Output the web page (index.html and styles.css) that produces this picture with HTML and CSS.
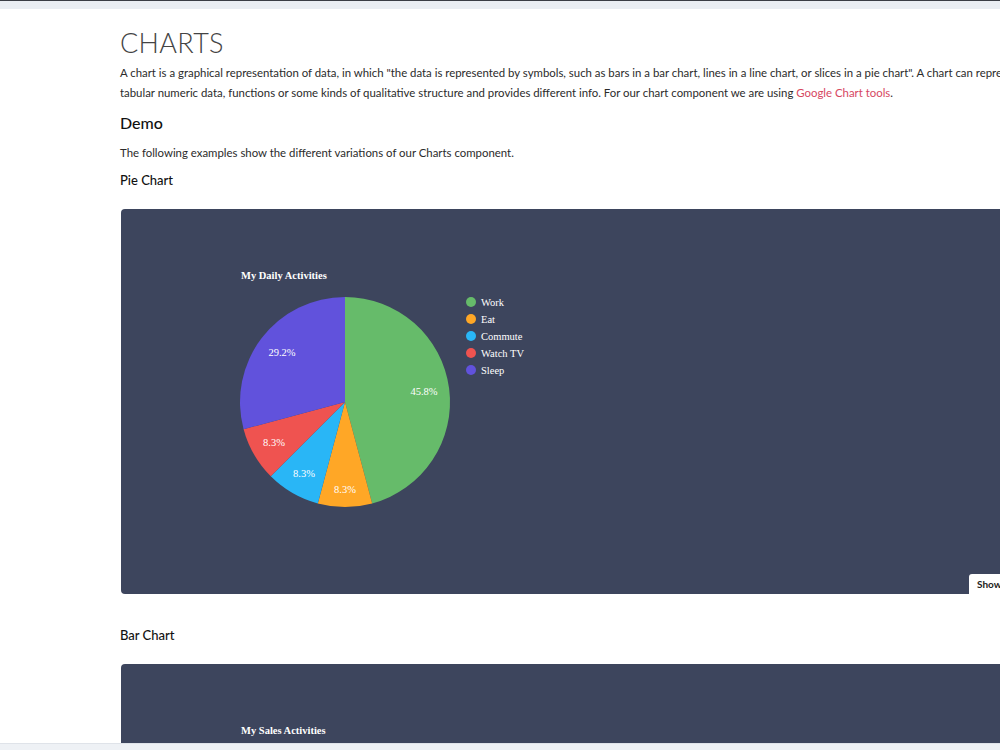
FILE: index.html
```html
<!DOCTYPE html>
<html lang="en">

<head>
  <meta charset="UTF-8">
  <meta name="viewport" content="width=device-width, initial-scale=1.0">
  <title>Charts</title>
  <link rel="stylesheet" href="styles.css">
</head>

<body>

  <div class="topbar"></div>

  <div class="page">
    <h1 class="page-title">CHARTS</h1>
    <p class="lead">A chart is a graphical representation of data, in which "the data is represented by symbols, such as bars in a bar chart, lines in a line chart, or slices in a pie chart". A chart can represent tabular numeric data, functions or some kinds of qualitative structure and provides different info. For our chart component we are using <a href="#" class="link">Google Chart tools</a>.</p>

    <h2 class="section-title">Demo</h2>
    <p class="intro">The following examples show the different variations of our Charts component.</p>

    <h3 class="demo-title">Pie Chart</h3>
    <div class="chart-box">
      <svg class="chart" width="920" height="385" viewBox="0 0 920 385">
        <text x="120" y="70" class="chart-heading">My Daily Activities</text>

        <!-- slices start at 12 o'clock, clockwise -->
        <path d="M224 193 L224 88 A105 105 0 0 1 251.18 294.42 Z" fill="#66bb6a" />
        <path d="M224 193 L251.18 294.42 A105 105 0 0 1 196.82 294.42 Z" fill="#ffa726" />
        <path d="M224 193 L196.82 294.42 A105 105 0 0 1 149.75 267.25 Z" fill="#29b6f6" />
        <path d="M224 193 L149.75 267.25 A105 105 0 0 1 122.58 220.18 Z" fill="#ef5350" />
        <path d="M224 193 L122.58 220.18 A105 105 0 0 1 224 88 Z" fill="#6152dc" />

        <text x="303" y="186" class="slice-label" text-anchor="middle">45.8%</text>
        <text x="161" y="147" class="slice-label" text-anchor="middle">29.2%</text>
        <text x="153" y="237" class="slice-label" text-anchor="middle">8.3%</text>
        <text x="183" y="268" class="slice-label" text-anchor="middle">8.3%</text>
        <text x="224" y="284" class="slice-label" text-anchor="middle">8.3%</text>

        <circle cx="350" cy="93" r="5" fill="#66bb6a" />
        <text x="360" y="96.5" class="legend-label">Work</text>
        <circle cx="350" cy="110" r="5" fill="#ffa726" />
        <text x="360" y="113.5" class="legend-label">Eat</text>
        <circle cx="350" cy="127" r="5" fill="#29b6f6" />
        <text x="360" y="130.5" class="legend-label">Commute</text>
        <circle cx="350" cy="144" r="5" fill="#ef5350" />
        <text x="360" y="147.5" class="legend-label">Watch TV</text>
        <circle cx="350" cy="161" r="5" fill="#6152dc" />
        <text x="360" y="164.5" class="legend-label">Sleep</text>
      </svg>
      <button class="show-code">Show Code</button>
    </div>

    <h3 class="demo-title demo-title-gap">Bar Chart</h3>
    <div class="chart-box">
      <svg class="chart" width="920" height="385" viewBox="0 0 920 385">
        <text x="120" y="70" class="chart-heading">My Sales Activities</text>
      </svg>
    </div>
  </div>

  <div class="bottombar"></div>

</body>

</html>
```

FILE: styles.css
```css
html,
body {
  margin: 0;
  padding: 0;
  overflow: hidden;
  background-color: #fff;
}

body {
  font-family: Lato, "Open Sans", Arial, sans-serif;
  color: #333;
  height: 750px;
}

.topbar {
  height: 8px;
  border-top: 1px solid #3a3d44;
  background-color: #e9edf2;
}

.bottombar {
  position: fixed;
  left: 0;
  right: 0;
  bottom: 0;
  height: 6px;
  border-top: 1px solid #dfe3e9;
  background-color: #eef1f5;
}

.page {
  padding-left: 120px;
  width: 930px;
}

.page-title {
  margin: 18px 0 0;
  font-size: 27px;
  line-height: 32px;
  font-weight: 300;
  letter-spacing: 0.3px;
  color: #444;
}

.lead {
  margin: 4px 0 0;
  font-size: 11.4px;
  line-height: 20px;
  color: #2b2b2b;
}

.link {
  color: #d6475f;
  text-decoration: none;
}

.section-title {
  margin: 10px 0 0;
  font-size: 16px;
  line-height: 20px;
  font-weight: 500;
  color: #111;
}

.intro {
  margin: 10px 0 0;
  font-size: 11.4px;
  line-height: 20px;
  color: #2b2b2b;
}

.demo-title {
  margin: 7px 0 0;
  font-size: 13px;
  line-height: 20px;
  font-weight: 500;
  color: #111;
}

.demo-title-gap {
  margin-top: 31px;
}

.chart-box {
  position: relative;
  margin: 19px 0 0 1px;
  height: 385px;
  width: 920px;
  border-radius: 4px;
  background-color: #3d455d;
  overflow: hidden;
}

.chart {
  display: block;
}

.chart-heading {
  font-family: "Liberation Serif", serif;
  font-size: 10.5px;
  font-weight: bold;
  fill: #fff;
}

.slice-label,
.legend-label {
  font-family: "Liberation Serif", serif;
  font-size: 10.5px;
  fill: #fff;
}

.show-code {
  position: absolute;
  left: 848px;
  bottom: 0;
  height: 20px;
  padding: 0 8px;
  border: none;
  border-radius: 3px 0 0 0;
  background-color: #fff;
  font-family: Lato, Arial, sans-serif;
  font-size: 10px;
  font-weight: bold;
  color: #222;
}
```
